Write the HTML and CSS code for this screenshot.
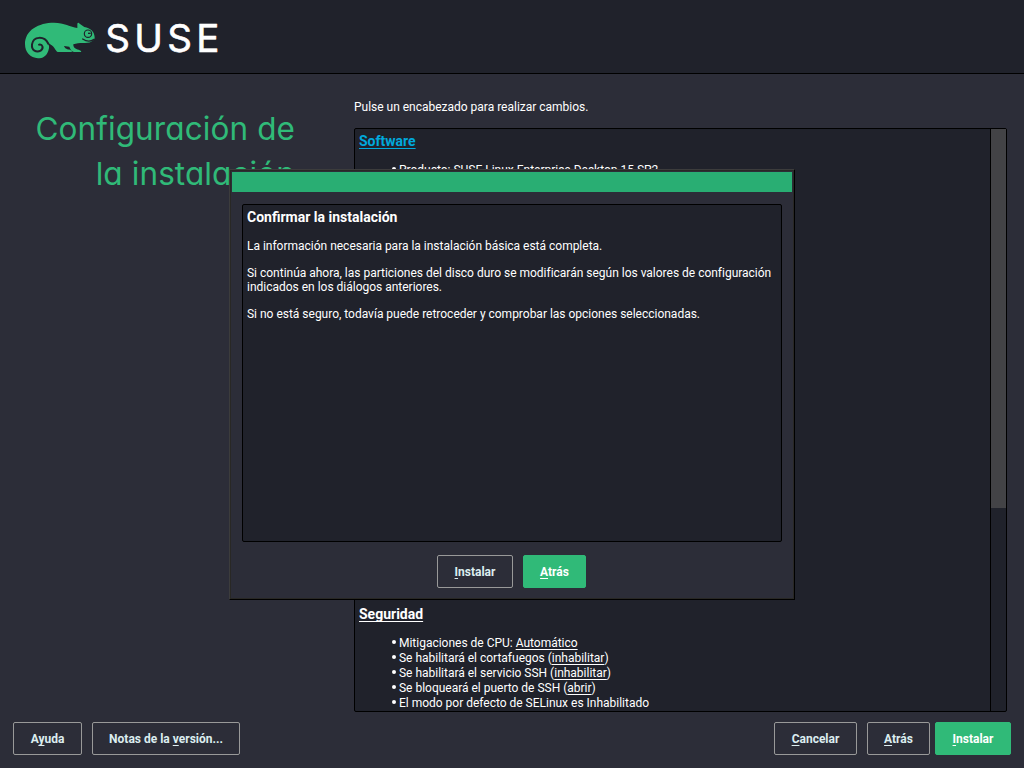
FILE: index.html
```html
<!DOCTYPE html>
<html lang="es">
<head>
<meta charset="utf-8">
<title>Configuración de la instalación</title>
<link rel="stylesheet" href="styles.css">
</head>
<body>
<div class="screen">
  <header class="banner">
    <svg class="logo" width="210" height="48" viewBox="16 14 210 48" role="img" aria-label="SUSE">
      <g transform="translate(16 10) scale(.33333)">
        <path class="logo-body" d="M27 102C27 60 68 38 114 38C145 38 163 51 184 54L184 41Q186 36 191 41L205 51C223 55 235 63 236 82C237 87 232 92 226 95C212 102 190 95 172 103C171 112 179 118 188 119Q196 121 196 126L174 126Q165 124 160 110L144 108C147 117 155 118 162 119Q168 121 168 126L125 126C118 123 116 106 94 98Q103 108 97 122C92 138 80 145 66 145C43 143 27 127 27 102Z"/>
        <path class="logo-line" d="M97 101C84 76 52 79 48 103C46 121 61 129 74 122C84 115 80 102 69 104"/>
        <circle class="logo-ring" cx="216" cy="71" r="11"/>
        <path class="logo-pupil" d="M216 68h8v4h-8z"/>
        <path class="logo-mouth" d="M200 87Q218 99 234 88"/>
      </g>
      <text class="wordmark" x="105.2 134.2 167.2 196.2" y="52">SUSE</text>
    </svg>
  </header>

  <main class="main">
    <h1 class="title">Configuración de<br>la instalación</h1>
    <section class="content">
      <p class="hint">Pulse un encabezado para realizar cambios.</p>
      <div class="summary">
        <div class="summary-text">
          <div>
            <h2><a class="link active">Software</a></h2>
            <ul><li>Producto: SUSE Linux Enterprise Desktop 15 SP2</li></ul>
          </div>
          <div>
            <h2><a class="link">Seguridad</a></h2>
            <ul>
              <li>Mitigaciones de CPU: <a class="link">Automático</a></li>
              <li>Se habilitará el cortafuegos (<a class="link">inhabilitar</a>)</li>
              <li>Se habilitará el servicio SSH (<a class="link">inhabilitar</a>)</li>
              <li>Se bloqueará el puerto de SSH (<a class="link">abrir</a>)</li>
              <li>El modo por defecto de SELinux es Inhabilitado</li>
            </ul>
          </div>
        </div>
        <div class="scrollbar"><div class="thumb"></div></div>
      </div>
    </section>
  </main>

  <footer class="actions">
    <button class="btn help">A<span class="key">y</span>uda</button>
    <button class="btn notes">Notas de la <span class="key">v</span>ersión...</button>
    <button class="btn cancel"><span class="key">C</span>ancelar</button>
    <button class="btn back"><span class="key">A</span>trás</button>
    <button class="btn install primary"><span class="key">I</span>nstalar</button>
  </footer>

  <div class="dialog" role="dialog">
    <div class="dialog-bar"></div>
    <div class="dialog-text">
      <h2>Confirmar la instalación</h2>
      <p>La información necesaria para la instalación básica está completa.</p>
      <p>Si continúa ahora, las particiones del disco duro se modificarán según los valores de configuración indicados en los diálogos anteriores.</p>
      <p>Si no está seguro, todavía puede retroceder y comprobar las opciones seleccionadas.</p>
    </div>
    <div class="dialog-actions">
      <button class="btn install"><span class="key">I</span>nstalar</button>
      <button class="btn back primary"><span class="key">A</span>trás</button>
    </div>
  </div>
</div>
</body>
</html>
```

FILE: styles.css
```css
* { box-sizing: border-box; }
body { margin: 0; background: #2c2d38; color: #fff; font: 12px/15px Roboto, sans-serif; }
h1, h2, p, ul { margin: 0; padding: 0; }

.screen { position: relative; width: 1024px; height: 768px; overflow: hidden; display: flex; flex-direction: column; }

.banner { height: 74px; flex: none; background: #20222b; border-bottom: 1px solid #000; padding: 14px 16px; }
.logo { display: block; }
.logo-body { fill: #30ba78; }
.logo-line, .logo-ring, .logo-mouth { fill: none; stroke: #20222b; stroke-linecap: round; }
.logo-line { stroke-width: 6; }
.logo-ring { stroke-width: 3.5; }
.logo-mouth { stroke-width: 4; }
.logo-pupil { fill: #20222b; }
.wordmark { font: 400 38.5px Inter, sans-serif; fill: #fff; stroke: #fff; stroke-width: .6; stroke-linejoin: round; }

.main { height: 638px; flex: none; display: flex; }
.title { width: 295px; margin-right: 59px; padding-top: 32px; text-align: right; color: #30ba78; font: 400 31.5px/45px Inter, sans-serif; letter-spacing: .1px; font-feature-settings: "cv11"; white-space: nowrap; }
.content { width: 653px; padding-top: 26px; }
.hint { height: 28px; letter-spacing: -.01px; }

.summary { height: 584px; display: flex; background: #20222b; border: 1px solid #000; border-radius: 2px; }
.summary-text { flex: 1; padding: 4px 4px 0; display: flex; flex-direction: column; justify-content: space-between; }
.summary h2, .dialog h2 { font-size: 14px; line-height: 17px; font-weight: 700; }
.summary ul { list-style: none; margin-top: 13px; padding-left: 33px; }
.summary li { letter-spacing: -.01px; }
.summary li::before { content: ""; display: inline-block; width: 4px; height: 4px; margin-right: 3px; border-radius: 50%; background: #fff; vertical-align: 3px; }
.link { text-decoration: underline; text-decoration-thickness: 1px; text-underline-offset: 2px; text-decoration-skip-ink: none; }
.active { color: #00a9dc; }
.scrollbar { width: 16px; border-left: 1px solid #000; }
.thumb { height: 379px; background: #434346; }

.actions { display: flex; padding: 10px 13px; }
.btn { height: 33px; padding: 2px 0 0; border: 1px solid #999; border-radius: 2px; background: #2c2d38; color: #dcedf0; font: 700 12px/15px Roboto, sans-serif; white-space: nowrap; }
.btn.primary { background: #30ba78; border-color: #30ba78; color: #fff; }
.key { text-decoration: underline; text-decoration-thickness: 1px; text-underline-offset: 2px; text-decoration-skip-ink: none; }
.help { width: 69px; }
.notes { width: 148px; margin-left: 10px; }
.cancel { width: 83px; margin-left: auto; }
.back { width: 63px; margin-left: 10px; }
.install { width: 76px; }
.actions .install { margin-left: 5px; }

.dialog { position: absolute; left: 229px; top: 169px; width: 566px; height: 431px; padding: 2px; background: #2c2d38; border: 1px solid #000; border-top-color: #3c3c3c; border-left-color: #3c3c3c; box-shadow: inset -1px -1px #292825, inset 1px 1px #292825; }
.dialog-bar { height: 20px; background: #29ae73; }
.dialog-text { width: 540px; height: 338px; margin: 12px 10px 13px; padding: 3px 4px; background: #20222b; border: 1px solid #000; border-radius: 2px; }
.dialog h2 { line-height: 19px; margin-bottom: 12px; }
.dialog p { line-height: 14px; margin-bottom: 13px; letter-spacing: -.01px; }
.dialog-actions { display: flex; justify-content: center; padding-right: 1px; }
```
